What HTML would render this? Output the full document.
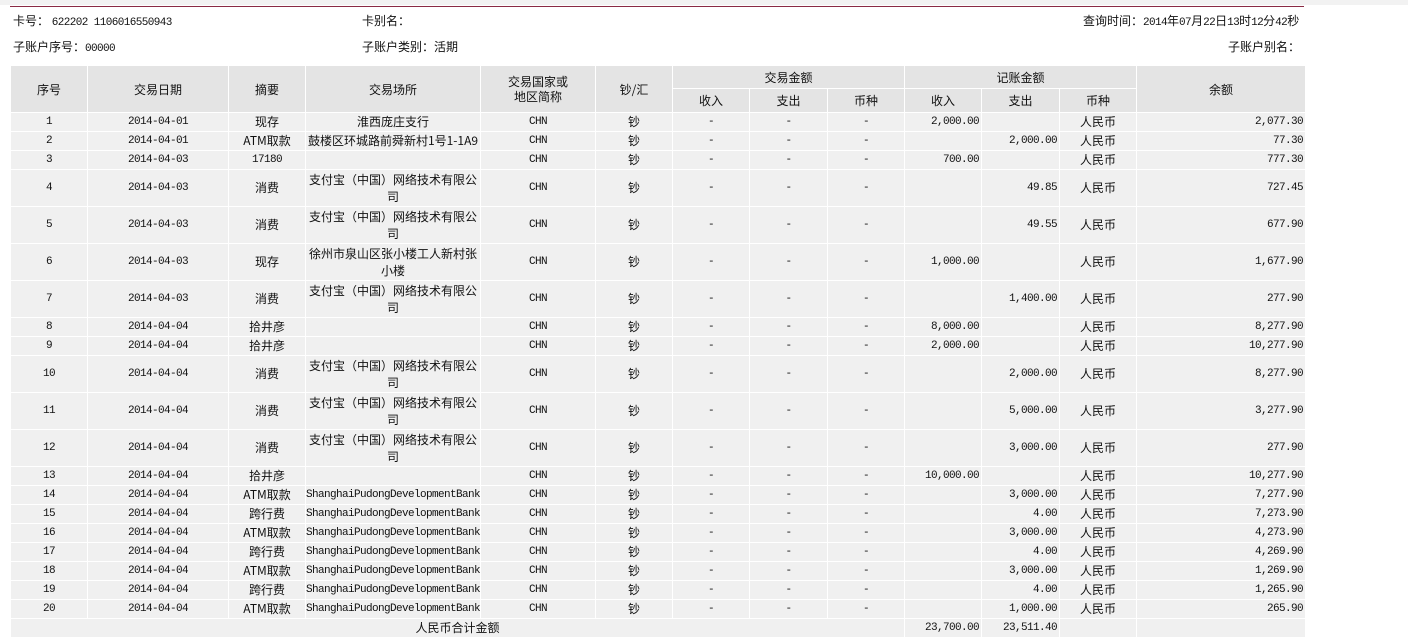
<!DOCTYPE html>
<html><head><meta charset="utf-8">
<style>
body{margin:0;background:#fff;font-family:"Liberation Mono","Noto Sans CJK SC",monospace;font-size:12px;color:#111;width:1408px;height:637px;overflow:hidden;position:relative}
.topband{position:absolute;left:0;top:0;width:1408px;height:5px;background:#f2f2f2}
.line{position:absolute;left:10px;top:6px;width:1294px;height:1px;background:#8a2a44}
.lbl{position:absolute;font-family:"Noto Sans CJK SC",sans-serif;font-size:12px;line-height:14px;white-space:nowrap}
.num{font-family:"Liberation Mono",monospace;font-size:11px;letter-spacing:-0.6px}
table{position:absolute;left:10px;top:65px;width:1295px;border-collapse:collapse;table-layout:fixed}
tr{height:19px}
tr.tl{height:37px}
tr.h1{height:23px}
tr.h2{height:24px}
td{border:1px solid #fff;background:#f0f0f0;text-align:center;padding:0;line-height:12px;font-size:11px;letter-spacing:-0.6px;white-space:nowrap;overflow:hidden}
td.c{font-family:"Noto Sans CJK SC",sans-serif;font-size:12px;letter-spacing:0}
td.t{white-space:normal;line-height:17px}
tr.h1 td,tr.h2 td{background:#e4e4e4;font-family:"Noto Sans CJK SC",sans-serif;font-size:12px;letter-spacing:0;line-height:15px}
td.r{text-align:right;padding-right:2px}
</style></head><body>
<div class="topband"></div><div class="line"></div>
<div class="lbl" style="left:13px;top:14px">卡号： <span class="num">622202 1106016550943</span></div>
<div class="lbl" style="left:362px;top:14px">卡别名：</div>
<div class="lbl" style="left:1083px;top:14px">查询时间：<span class="num">2014</span>年<span class="num">07</span>月<span class="num">22</span>日<span class="num">13</span>时<span class="num">12</span>分<span class="num">42</span>秒</div>
<div class="lbl" style="left:13px;top:40px">子账户序号：<span class="num">00000</span></div>
<div class="lbl" style="left:362px;top:40px">子账户类别：活期</div>
<div class="lbl" style="left:1228px;top:40px">子账户别名：</div>
<table>
<colgroup><col style="width:77px"><col style="width:141px"><col style="width:77px"><col style="width:175px"><col style="width:115px"><col style="width:77px"><col style="width:77px"><col style="width:78px"><col style="width:77px"><col style="width:77px"><col style="width:78px"><col style="width:77px"><col style="width:169px"></colgroup>
<tr class="h1"><td rowspan="2">序号</td><td rowspan="2">交易日期</td><td rowspan="2">摘要</td><td rowspan="2">交易场所</td><td rowspan="2">交易国家或<br>地区简称</td><td rowspan="2">钞/汇</td><td colspan="3">交易金额</td><td colspan="3">记账金额</td><td rowspan="2">余额</td></tr>
<tr class="h2"><td>收入</td><td>支出</td><td>币种</td><td>收入</td><td>支出</td><td>币种</td></tr>
<tr><td>1</td><td>2014-04-01</td><td class="c">现存</td><td class="c">淮西庞庄支行</td><td>CHN</td><td class="c">钞</td><td>-</td><td>-</td><td>-</td><td class="r">2,000.00</td><td></td><td class="c">人民币</td><td class="r">2,077.30</td></tr>
<tr><td>2</td><td>2014-04-01</td><td class="c">ATM取款</td><td class="c">鼓楼区环城路前舜新村1号1-1A9</td><td>CHN</td><td class="c">钞</td><td>-</td><td>-</td><td>-</td><td></td><td class="r">2,000.00</td><td class="c">人民币</td><td class="r">77.30</td></tr>
<tr><td>3</td><td>2014-04-03</td><td>17180</td><td></td><td>CHN</td><td class="c">钞</td><td>-</td><td>-</td><td>-</td><td class="r">700.00</td><td></td><td class="c">人民币</td><td class="r">777.30</td></tr>
<tr class="tl"><td>4</td><td>2014-04-03</td><td class="c">消费</td><td class="c t">支付宝（中国）网络技术有限公<br>司</td><td>CHN</td><td class="c">钞</td><td>-</td><td>-</td><td>-</td><td></td><td class="r">49.85</td><td class="c">人民币</td><td class="r">727.45</td></tr>
<tr class="tl"><td>5</td><td>2014-04-03</td><td class="c">消费</td><td class="c t">支付宝（中国）网络技术有限公<br>司</td><td>CHN</td><td class="c">钞</td><td>-</td><td>-</td><td>-</td><td></td><td class="r">49.55</td><td class="c">人民币</td><td class="r">677.90</td></tr>
<tr class="tl"><td>6</td><td>2014-04-03</td><td class="c">现存</td><td class="c t">徐州市泉山区张小楼工人新村张<br>小楼</td><td>CHN</td><td class="c">钞</td><td>-</td><td>-</td><td>-</td><td class="r">1,000.00</td><td></td><td class="c">人民币</td><td class="r">1,677.90</td></tr>
<tr class="tl"><td>7</td><td>2014-04-03</td><td class="c">消费</td><td class="c t">支付宝（中国）网络技术有限公<br>司</td><td>CHN</td><td class="c">钞</td><td>-</td><td>-</td><td>-</td><td></td><td class="r">1,400.00</td><td class="c">人民币</td><td class="r">277.90</td></tr>
<tr><td>8</td><td>2014-04-04</td><td class="c">拾井彦</td><td></td><td>CHN</td><td class="c">钞</td><td>-</td><td>-</td><td>-</td><td class="r">8,000.00</td><td></td><td class="c">人民币</td><td class="r">8,277.90</td></tr>
<tr><td>9</td><td>2014-04-04</td><td class="c">拾井彦</td><td></td><td>CHN</td><td class="c">钞</td><td>-</td><td>-</td><td>-</td><td class="r">2,000.00</td><td></td><td class="c">人民币</td><td class="r">10,277.90</td></tr>
<tr class="tl"><td>10</td><td>2014-04-04</td><td class="c">消费</td><td class="c t">支付宝（中国）网络技术有限公<br>司</td><td>CHN</td><td class="c">钞</td><td>-</td><td>-</td><td>-</td><td></td><td class="r">2,000.00</td><td class="c">人民币</td><td class="r">8,277.90</td></tr>
<tr class="tl"><td>11</td><td>2014-04-04</td><td class="c">消费</td><td class="c t">支付宝（中国）网络技术有限公<br>司</td><td>CHN</td><td class="c">钞</td><td>-</td><td>-</td><td>-</td><td></td><td class="r">5,000.00</td><td class="c">人民币</td><td class="r">3,277.90</td></tr>
<tr class="tl"><td>12</td><td>2014-04-04</td><td class="c">消费</td><td class="c t">支付宝（中国）网络技术有限公<br>司</td><td>CHN</td><td class="c">钞</td><td>-</td><td>-</td><td>-</td><td></td><td class="r">3,000.00</td><td class="c">人民币</td><td class="r">277.90</td></tr>
<tr><td>13</td><td>2014-04-04</td><td class="c">拾井彦</td><td></td><td>CHN</td><td class="c">钞</td><td>-</td><td>-</td><td>-</td><td class="r">10,000.00</td><td></td><td class="c">人民币</td><td class="r">10,277.90</td></tr>
<tr><td>14</td><td>2014-04-04</td><td class="c">ATM取款</td><td>ShanghaiPudongDevelopmentBank</td><td>CHN</td><td class="c">钞</td><td>-</td><td>-</td><td>-</td><td></td><td class="r">3,000.00</td><td class="c">人民币</td><td class="r">7,277.90</td></tr>
<tr><td>15</td><td>2014-04-04</td><td class="c">跨行费</td><td>ShanghaiPudongDevelopmentBank</td><td>CHN</td><td class="c">钞</td><td>-</td><td>-</td><td>-</td><td></td><td class="r">4.00</td><td class="c">人民币</td><td class="r">7,273.90</td></tr>
<tr><td>16</td><td>2014-04-04</td><td class="c">ATM取款</td><td>ShanghaiPudongDevelopmentBank</td><td>CHN</td><td class="c">钞</td><td>-</td><td>-</td><td>-</td><td></td><td class="r">3,000.00</td><td class="c">人民币</td><td class="r">4,273.90</td></tr>
<tr><td>17</td><td>2014-04-04</td><td class="c">跨行费</td><td>ShanghaiPudongDevelopmentBank</td><td>CHN</td><td class="c">钞</td><td>-</td><td>-</td><td>-</td><td></td><td class="r">4.00</td><td class="c">人民币</td><td class="r">4,269.90</td></tr>
<tr><td>18</td><td>2014-04-04</td><td class="c">ATM取款</td><td>ShanghaiPudongDevelopmentBank</td><td>CHN</td><td class="c">钞</td><td>-</td><td>-</td><td>-</td><td></td><td class="r">3,000.00</td><td class="c">人民币</td><td class="r">1,269.90</td></tr>
<tr><td>19</td><td>2014-04-04</td><td class="c">跨行费</td><td>ShanghaiPudongDevelopmentBank</td><td>CHN</td><td class="c">钞</td><td>-</td><td>-</td><td>-</td><td></td><td class="r">4.00</td><td class="c">人民币</td><td class="r">1,265.90</td></tr>
<tr><td>20</td><td>2014-04-04</td><td class="c">ATM取款</td><td>ShanghaiPudongDevelopmentBank</td><td>CHN</td><td class="c">钞</td><td>-</td><td>-</td><td>-</td><td></td><td class="r">1,000.00</td><td class="c">人民币</td><td class="r">265.90</td></tr>
<tr><td colspan="9" class="c">人民币合计金额</td><td class="r">23,700.00</td><td class="r">23,511.40</td><td></td><td></td></tr>
</table>
</body></html>
